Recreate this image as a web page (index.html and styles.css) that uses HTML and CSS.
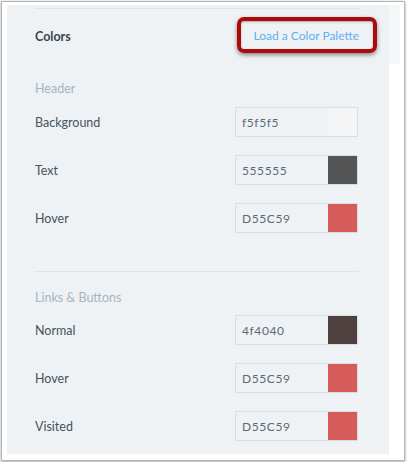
FILE: index.html
```html
<!DOCTYPE html>
<html>
<head>
<meta charset="utf-8">
<link rel="stylesheet" href="styles.css">
</head>
<body>
<div class="frame">
  <div class="panel">
    <div class="top-rule"></div>
    <div class="section-head">
      <span class="section-title">Colors</span>
      <a class="palette-link">Load a Color Palette</a>
    </div>

    <div class="group-label first">Header</div>
    <div class="row">
      <span class="row-label">Background</span>
      <div class="color-input"><span class="hex">f5f5f5</span><span class="swatch" style="background:#f5f5f5"></span></div>
    </div>
    <div class="row">
      <span class="row-label">Text</span>
      <div class="color-input"><span class="hex">555555</span><span class="swatch" style="background:#555555"></span></div>
    </div>
    <div class="row">
      <span class="row-label">Hover</span>
      <div class="color-input"><span class="hex">D55C59</span><span class="swatch" style="background:#D55C59"></span></div>
    </div>

    <div class="divider"></div>

    <div class="group-label">Links &amp; Buttons</div>
    <div class="row">
      <span class="row-label">Normal</span>
      <div class="color-input"><span class="hex">4f4040</span><span class="swatch" style="background:#4f4040"></span></div>
    </div>
    <div class="row">
      <span class="row-label">Hover</span>
      <div class="color-input"><span class="hex">D55C59</span><span class="swatch" style="background:#D55C59"></span></div>
    </div>
    <div class="row">
      <span class="row-label">Visited</span>
      <div class="color-input"><span class="hex">D55C59</span><span class="swatch" style="background:#D55C59"></span></div>
    </div>
  </div>
  <div class="side-strip"></div>
</div>
</body>
</html>
```

FILE: styles.css
```css
html, body {
  margin: 0;
  padding: 0;
  background: #ffffff;
}

body {
  font-family: Lato, "Open Sans", sans-serif;
}

.frame {
  margin: 1px;
  width: 404px;
  height: 460px;
  border: 1px solid #b4b4b4;
  box-shadow: 0 1px 3px rgba(0, 0, 0, 0.35);
  background: #ffffff;
  display: flex;
  align-items: flex-start;
  padding: 3px 0 0 5px;
  box-sizing: border-box;
}

.panel {
  width: 382px;
  height: 449px;
  flex: none;
  background: #eef2f5;
  padding: 0 30px 0 27px;
  box-sizing: border-box;
}

.side-strip {
  width: 11px;
  height: 59px;
  flex: none;
  background: #f4f6f8;
}

.top-rule {
  margin-top: 3px;
  height: 1px;
  background: #dde3e8;
}

.section-head {
  height: 52px;
  display: flex;
  justify-content: space-between;
  align-items: center;
  padding-left: 1px;
}

.section-title {
  font-weight: 700;
  font-size: 12.5px;
  color: #3a444d;
  margin-top: 2px;
}

.palette-link {
  position: relative;
  font-size: 12px;
  color: #5eb0f2;
}

.palette-link::after {
  content: "";
  position: absolute;
  left: -17px;
  right: -18px;
  top: -11px;
  bottom: -10px;
  border: 4px solid #ad0a0a;
  border-radius: 7px;
  box-shadow: 0 2px 4px rgba(0, 0, 0, 0.45), inset 0 1px 2px rgba(0, 0, 0, 0.3);
}

.group-label {
  margin-top: 19px;
  height: 18px;
  line-height: 18px;
  font-size: 12.5px;
  color: #a6b5c1;
  padding-left: 1px;
}

.divider + .group-label {
  margin-top: 17px;
  height: 17px;
}

.row {
  height: 48px;
  display: flex;
  justify-content: space-between;
  align-items: center;
  padding-left: 1px;
}

.row-label {
  font-size: 12.5px;
  color: #46525c;
}

.color-input {
  width: 123px;
  height: 30px;
  box-sizing: border-box;
  border: 1px solid #d8dee3;
  background: #eef2f5;
  display: flex;
  align-items: center;
  margin-right: 1px;
}

.hex {
  flex: 1;
  padding-left: 6px;
  font-size: 12px;
  letter-spacing: 0.6px;
  color: #5c6a76;
}

.swatch {
  width: 29px;
  height: 100%;
  flex: none;
}

.divider {
  margin-top: 29px;
  height: 1px;
  background: #dde3e8;
}
```
